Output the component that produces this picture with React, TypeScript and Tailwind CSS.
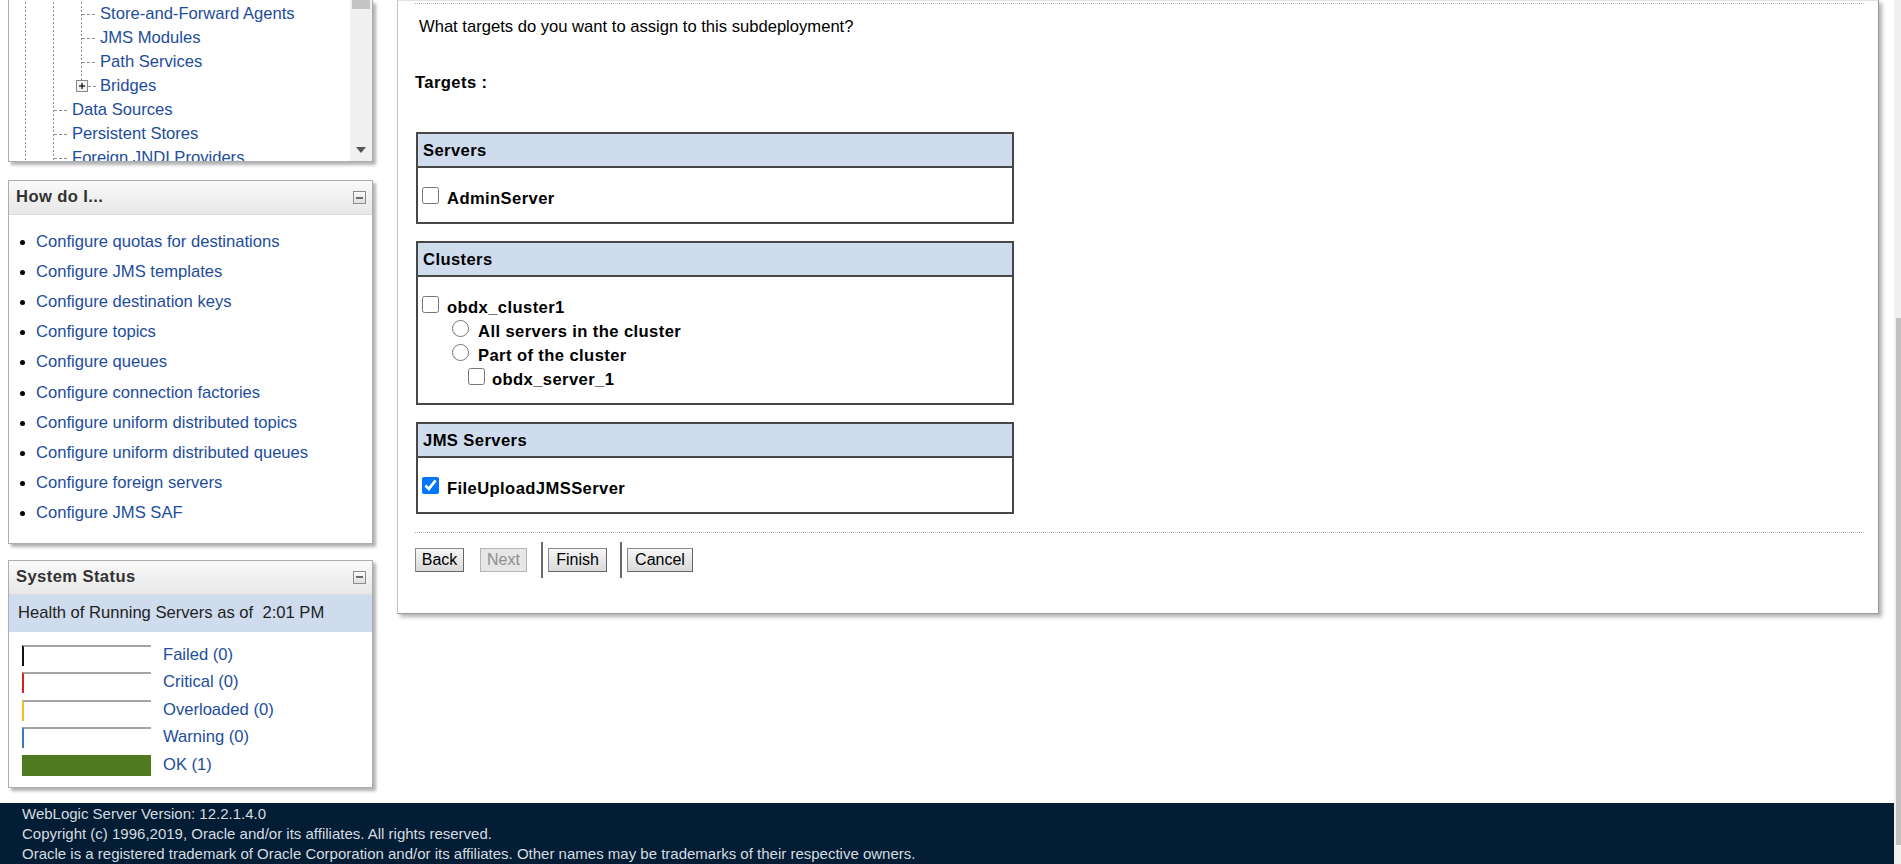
import * as React from "react";

type TreeKind = "pipe" | "tee" | "plus";

const treeRows: { label: string; cells: TreeKind[] }[] = [
  { label: "Store-and-Forward Agents", cells: ["pipe", "pipe", "tee"] },
  { label: "JMS Modules", cells: ["pipe", "pipe", "tee"] },
  { label: "Path Services", cells: ["pipe", "pipe", "tee"] },
  { label: "Bridges", cells: ["pipe", "pipe", "plus"] },
  { label: "Data Sources", cells: ["pipe", "tee"] },
  { label: "Persistent Stores", cells: ["pipe", "tee"] },
  { label: "Foreign JNDI Providers", cells: ["pipe", "tee"] },
];

const howDoI = [
  "Configure quotas for destinations",
  "Configure JMS templates",
  "Configure destination keys",
  "Configure topics",
  "Configure queues",
  "Configure connection factories",
  "Configure uniform distributed topics",
  "Configure uniform distributed queues",
  "Configure foreign servers",
  "Configure JMS SAF",
];

const health = [
  { label: "Failed (0)", edge: "border-l-[#111111]", fill: "" },
  { label: "Critical (0)", edge: "border-l-[#d42020]", fill: "" },
  { label: "Overloaded (0)", edge: "border-l-[#f0c020]", fill: "" },
  { label: "Warning (0)", edge: "border-l-[#3a78c0]", fill: "" },
  { label: "OK (1)", edge: "", fill: "bg-[#507a1f]" },
];

const TreeCell = ({ kind }: { kind: TreeKind }) => {
  if (kind === "pipe") {
    return (
      <svg width="28" height="24" className="shrink-0">
        <line x1="16.5" y1="0" x2="16.5" y2="24" stroke="#8f8f8f" strokeDasharray="2 2" />
      </svg>
    );
  }
  if (kind === "tee") {
    return (
      <svg width="32" height="24" className="shrink-0">
        <line x1="16.5" y1="0" x2="16.5" y2="24" stroke="#8f8f8f" strokeDasharray="2 2" />
        <line x1="17" y1="12.5" x2="32" y2="12.5" stroke="#8f8f8f" strokeDasharray="3 2" />
      </svg>
    );
  }
  return (
    <svg width="32" height="24" className="shrink-0">
      <line x1="16.5" y1="0" x2="16.5" y2="6" stroke="#8f8f8f" strokeDasharray="2 2" />
      <rect x="11.5" y="6.5" width="11" height="11" fill="#f2f2f2" stroke="#8a8a8a" />
      <line x1="14" y1="12" x2="20" y2="12" stroke="#000" strokeWidth="1.2" />
      <line x1="17" y1="9" x2="17" y2="15" stroke="#000" strokeWidth="1.2" />
      <line x1="23" y1="12.5" x2="32" y2="12.5" stroke="#8f8f8f" strokeDasharray="3 2" />
    </svg>
  );
};

const MinusIcon = () => (
  <span className="flex h-[13px] w-[13px] items-center justify-center border border-[#8c8c8c] bg-gradient-to-b from-[#fafafa] to-[#dedede]">
    <span className="h-[2px] w-[7px] bg-[#6a6a6a]" />
  </span>
);

const PanelHeader = ({ title }: { title: string }) => (
  <div className="flex h-[34px] items-center justify-between border-b border-[#dcdcdc] bg-gradient-to-b from-[#f9f9f9] to-[#e8e8e8] pl-[7px] pr-[6px]">
    <span className="text-[16.6px] font-bold tracking-[0.4px] text-[#333333]">{title}</span>
    <MinusIcon />
  </div>
);

const TargetBox = ({ title, children }: { title: string; children: React.ReactNode }) => (
  <div className="w-[598px] border-2 border-[#474747]">
    <div className="flex h-[34px] items-center border-b-2 border-[#474747] bg-[#cfdcee] pl-[5px] pt-[2px] text-[16.6px] font-bold tracking-[0.4px] text-black">
      {title}
    </div>
    <div className="flex flex-col pb-[11px] pl-[4px] pt-[19px]">{children}</div>
  </div>
);

const Option = ({
  indent,
  gap,
  type,
  checked,
  label,
}: {
  indent: string;
  gap: string;
  type: "checkbox" | "radio";
  checked?: boolean;
  label: string;
}) => (
  <label className={`flex h-[24px] items-start ${indent}`}>
    <input type={type} checked={!!checked} readOnly className="h-[17px] w-[17px] shrink-0" />
    <span className={`${gap} text-[16.6px] font-bold leading-[24px] tracking-[0.4px] text-black`}>{label}</span>
  </label>
);

const WizardButton = ({ label, width, disabled }: { label: string; width: string; disabled?: boolean }) => (
  <button
    className={`h-[24px] ${width} border text-[16px] leading-[22px] [font-family:Arial,Liberation_Sans,sans-serif] ${
      disabled
        ? "border-[#b4b4b4] bg-[#e6e6e6] text-[#8e8e8e]"
        : "border-[#8a8a8a] border-b-[#666666] border-r-[#666666] bg-gradient-to-b from-[#f6f6f6] to-[#d9d9d9] text-black"
    }`}
  >
    {label}
  </button>
);

export default function App() {
  return (
    <div className="flex h-[864px] w-full overflow-hidden bg-white [font-family:Liberation_Sans,Arial,sans-serif]">
      <div className="flex min-w-0 flex-1 flex-col">
        <div className="flex h-[803px] shrink-0 items-start">
          {/* left column */}
          <div className="ml-[8px] flex w-[365px] shrink-0 flex-col">
            <div className="flex h-[162px] border-x border-b border-[#a9aeb3] shadow-[3px_3px_3px_rgba(0,0,0,0.3)]">
              <div className="flex min-w-0 flex-1 flex-col overflow-hidden pt-[2px]">
                {treeRows.map((row) => (
                  <div key={row.label} className="flex h-[24px] shrink-0 items-center">
                    {row.cells.map((c, i) => (
                      <TreeCell key={i} kind={c} />
                    ))}
                    <span className="whitespace-nowrap pl-[3px] text-[16.6px] text-[#1d4d9c]">{row.label}</span>
                  </div>
                ))}
              </div>
              <div className="flex w-[22px] flex-col justify-between bg-[#f0f0f0]">
                <div className="mx-[2px] h-[9px] bg-[#c4c4c4]" />
                <div className="flex justify-center pb-[8px]">
                  <svg width="10" height="6">
                    <polygon points="0,0 10,0 5,6" fill="#555555" />
                  </svg>
                </div>
              </div>
            </div>

            <div className="mt-[18px] flex flex-col border border-[#a9aeb3] bg-white shadow-[3px_3px_3px_rgba(0,0,0,0.3)]">
              <PanelHeader title="How do I..." />
              <ul className="flex flex-col pb-[14px] pt-[12px]">
                {howDoI.map((item) => (
                  <li key={item} className="flex h-[30.2px] items-center pl-[11px]">
                    <span className="h-[5px] w-[5px] rounded-full bg-black" />
                    <span className="ml-[11px] text-[16.6px] text-[#1d4d9c]">{item}</span>
                  </li>
                ))}
              </ul>
            </div>

            <div className="mt-[16px] flex flex-col border border-[#a9aeb3] bg-white shadow-[3px_3px_3px_rgba(0,0,0,0.3)]">
              <PanelHeader title="System Status" />
              <div className="flex h-[37px] items-center bg-[#cfdcee] pl-[9px] text-[16.6px] text-[#222222]">
                Health of Running Servers as of&nbsp; 2:01 PM
              </div>
              <div className="flex flex-col gap-[6.5px] pb-[11px] pt-[13px]">
                {health.map((h) => (
                  <div key={h.label} className="flex h-[21px] items-center pl-[13px]">
                    <span
                      className={`h-[21px] w-[129px] ${
                        h.fill ? h.fill : `border-l-[2px] border-t-[2px] border-t-[#a4a4a4] ${h.edge}`
                      }`}
                    />
                    <span className="ml-[12px] text-[16.6px] text-[#1d4d9c]">{h.label}</span>
                  </div>
                ))}
              </div>
            </div>
          </div>

          {/* main content */}
          <div className="ml-[24px] mr-[15px] flex min-w-0 flex-1 flex-col border-x border-b border-l-[#c4c4c4] border-r-[#9a9a9a] border-b-[#9a9a9a] bg-white pb-[35px] shadow-[3px_3px_4px_rgba(0,0,0,0.3)]">
            <div className="h-[1px] bg-[#e2e2e2]" />
            <div className="ml-[17px] mr-[14px] mt-[2px] border-t border-dotted border-[#b4b4b4]" />
            <div className="ml-[21px] mt-[13px] h-[20px] text-[16.6px] leading-[20px] text-black">
              What targets do you want to assign to this subdeployment?
            </div>
            <div className="ml-[17px] mt-[36px] h-[20px] text-[16.6px] font-bold leading-[20px] tracking-[0.4px] text-black">
              Targets :
            </div>

            <div className="ml-[18px] mt-[39px] flex flex-col gap-[17px]">
              <TargetBox title="Servers">
                <Option indent="" gap="ml-[8px]" type="checkbox" label="AdminServer" />
              </TargetBox>
              <TargetBox title="Clusters">
                <Option indent="" gap="ml-[8px]" type="checkbox" label="obdx_cluster1" />
                <Option indent="ml-[30px]" gap="ml-[9px]" type="radio" label="All servers in the cluster" />
                <Option indent="ml-[30px]" gap="ml-[9px]" type="radio" label="Part of the cluster" />
                <Option indent="ml-[46px]" gap="ml-[7px]" type="checkbox" label="obdx_server_1" />
              </TargetBox>
              <TargetBox title="JMS Servers">
                <Option indent="" gap="ml-[8px]" type="checkbox" checked label="FileUploadJMSServer" />
              </TargetBox>
            </div>

            <div className="ml-[17px] mr-[14px] mt-[18px] border-t border-dotted border-[#b4b4b4]" />

            <div className="ml-[17px] mt-[9px] flex h-[36px] items-center">
              <WizardButton label="Back" width="w-[49px]" />
              <span className="ml-[16px]">
                <WizardButton label="Next" width="w-[47px]" disabled />
              </span>
              <span className="ml-[14px] h-[36px] w-[2px] bg-[#6a6a6a]" />
              <span className="ml-[5px]">
                <WizardButton label="Finish" width="w-[59px]" />
              </span>
              <span className="ml-[13px] h-[36px] w-[2px] bg-[#6a6a6a]" />
              <span className="ml-[5px]">
                <WizardButton label="Cancel" width="w-[66px]" />
              </span>
            </div>
          </div>
        </div>

        <footer className="flex h-[61px] shrink-0 flex-col overflow-hidden bg-[#021d34] pl-[22px] pt-[1px] text-[15px] leading-[20px] text-[#d6dbe0]">
          <span>WebLogic Server Version: 12.2.1.4.0</span>
          <span>Copyright (c) 1996,2019, Oracle and/or its affiliates. All rights reserved.</span>
          <span>
            Oracle is a registered trademark of Oracle Corporation and/or its affiliates. Other names may be trademarks
            of their respective owners.
          </span>
        </footer>
      </div>

      {/* page scrollbar */}
      <div className="flex w-[7px] shrink-0 flex-col bg-[#f0f0f0] pt-[318px]">
        <div className="ml-[2px] h-[527px] bg-[#c1c1c1]" />
      </div>
    </div>
  );
}
